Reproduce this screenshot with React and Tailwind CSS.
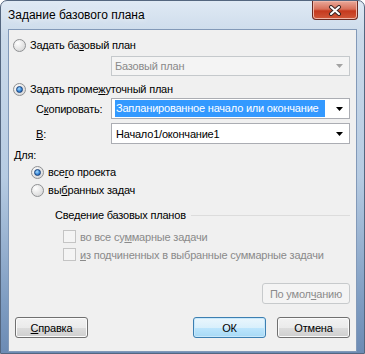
import React from 'react'

const font = { fontFamily: '"Liberation Sans", Arial, sans-serif' }

function Radio({ checked }) {
  return (
    <span className="relative flex h-[13px] w-[13px] shrink-0 items-center justify-center rounded-full border border-[#8f9193] bg-[radial-gradient(circle_at_35%_30%,#ffffff,#e9e9e9_45%,#cfd0d1)]">
      {checked && (
        <span className="h-[7px] w-[7px] rounded-full border border-[#17407a] bg-[radial-gradient(circle_at_40%_35%,#a9dcff,#3b8ad8_55%,#1a4f9c)]" />
      )}
    </span>
  )
}

function Check() {
  return (
    <span className="h-[13px] w-[13px] shrink-0 border border-[#c4c4c4] bg-[#f4f4f4]" />
  )
}

function Arrow({ disabled }) {
  return (
    <svg width="7" height="4" viewBox="0 0 7 4" className="shrink-0">
      <path d="M0 0H7L3.5 4Z" fill={disabled ? '#a3a3a3' : '#000'} />
    </svg>
  )
}

function Combo({ children, disabled }) {
  return (
    <div
      className={`flex h-full w-[239px] shrink-0 items-center border pl-[3px] pr-[6px] ${
        disabled ? 'border-[#c5c9cc] bg-[#f4f4f4] text-[#8a8a8a]' : 'border-[#abadb3] bg-white text-black'
      }`}
    >
      <div className="flex-1 overflow-hidden whitespace-nowrap">{children}</div>
      <Arrow disabled={disabled} />
    </div>
  )
}

function Btn({ children, kind }) {
  const cls =
    kind === 'default'
      ? 'border-[#3c7fb1] bg-[linear-gradient(#eaf6fd,#d9f0fc_50%,#bee6fd_50%,#a7d9f5)] shadow-[inset_0_0_0_1px_#c8e8fb] text-black'
      : kind === 'disabled'
      ? 'border-[#c7cacc] bg-[#f4f4f4] text-[#8b8b8b]'
      : 'border-[#707070] bg-[linear-gradient(#f2f2f2,#ebebeb_50%,#dddddd_50%,#cfcfcf)] shadow-[inset_0_0_0_1px_#fbfbfb] text-black'
  return (
    <div className={`flex h-[21px] items-center justify-center whitespace-nowrap rounded-[3px] border ${cls}`}>
      {children}
    </div>
  )
}

export default function App() {
  return (
    <div style={font} className="h-[354px] w-[365px] overflow-hidden whitespace-nowrap text-[11px] leading-[14px] tracking-[-0.2px] text-black">
      <div className="flex h-full flex-col rounded-t-[7px] border border-[#54667f] bg-[linear-gradient(180deg,#dfe9f4_0%,#cbdaea_10%,#b6cbe2_50%,#7f9dc2_85%,#6c8bb4_100%)]">
        {/* Title bar */}
        <div className="flex h-[28px] shrink-0 items-start justify-between">
          <div className="pl-[7px] pt-[7px] text-[12px] tracking-normal [text-shadow:0_0_6px_#ffffff]">Задание базового плана</div>
          <div className="mr-[6px] flex h-[19px] w-[46px] items-center justify-center rounded-b-[4px] border border-t-0 border-[#6a2a22] bg-[linear-gradient(#e9a99a,#d8705a_45%,#c5391e_55%,#d0583a)] shadow-[inset_0_0_0_1px_#f0b6a8]">
            <svg width="14" height="11" viewBox="0 0 14 11">
              <path d="M3 2L11 9M11 2L3 9" stroke="#3b2624" strokeWidth="4" strokeLinecap="round" />
              <path d="M3 2L11 9M11 2L3 9" stroke="#ffffff" strokeWidth="2" strokeLinecap="round" />
            </svg>
          </div>
        </div>

        {/* Client area */}
        <div className="mx-[7px] mb-[1px] flex flex-1 flex-col border border-[#8299b8] bg-[#f0f0f0] pl-[4px] pr-[6px]">
          <div className="mt-[8px] flex h-[14px] items-center gap-[4px]">
            <Radio />
            <span>
              Задать ба<u>з</u>овый план
            </span>
          </div>
          <div className="mt-[4px] flex h-[20px] justify-end">
            <Combo disabled>Базовый план</Combo>
          </div>
          <div className="mt-[6px] flex h-[14px] items-center gap-[4px]">
            <Radio checked />
            <span>
              Задать проме<u>ж</u>уточный план
            </span>
          </div>
          <div className="mt-[2px] flex h-[21px] items-center justify-between">
            <span className="pl-[23px]">
              С<u>к</u>опировать:
            </span>
            <Combo>
              <span className="inline-block bg-[#3399ff] pr-[6px] pl-[1px] text-white leading-[17px]">
                Запланированное начало или окончание
              </span>
            </Combo>
          </div>
          <div className="mt-[4px] flex h-[21px] items-center justify-between">
            <span className="pl-[23px]">
              <u>В</u>:
            </span>
            <Combo>
              <span className="pl-[1px]">Начало1/окончание1</span>
            </Combo>
          </div>
          <div className="mt-[4px] flex h-[14px] items-center pl-[1px]">Для:</div>
          <div className="mt-[3px] flex h-[14px] items-center gap-[4px] pl-[18px]">
            <Radio checked />
            <span>
              все<u>г</u>о проекта
            </span>
          </div>
          <div className="mt-[4px] flex h-[14px] items-center gap-[4px] pl-[18px]">
            <Radio />
            <span>
              вы<u>б</u>ранных задач
            </span>
          </div>
          <div className="mt-[11px] flex h-[14px] items-center gap-[5px] pl-[42px]">
            <span>Сведение базовых планов</span>
            <div className="h-px flex-1 bg-[#dcdcdc]" />
          </div>
          <div className="mt-[8px] flex h-[13px] items-center gap-[4px] pl-[50px] text-[#8a8a8a]">
            <Check />
            <span>
              во все су<u>м</u>марные задачи
            </span>
          </div>
          <div className="mt-[5px] flex h-[13px] items-center gap-[4px] pl-[50px] text-[#8a8a8a]">
            <Check />
            <span>
              <u>и</u>з подчиненных в выбранные суммарные задачи
            </span>
          </div>
          <div className="mt-[22px] flex justify-end">
            <div className="w-[88px]">
              <Btn kind="disabled">
                По умол<u>ч</u>анию
              </Btn>
            </div>
          </div>
          <div className="mt-[13px] flex items-center pl-[2px]">
            <div className="w-[73px]">
              <Btn>
                <u>С</u>правка
              </Btn>
            </div>
            <div className="flex-1" />
            <div className="w-[73px]">
              <Btn kind="default">ОК</Btn>
            </div>
            <div className="ml-[11px] w-[73px]">
              <Btn>Отмена</Btn>
            </div>
          </div>
        </div>
      </div>
    </div>
  )
}
